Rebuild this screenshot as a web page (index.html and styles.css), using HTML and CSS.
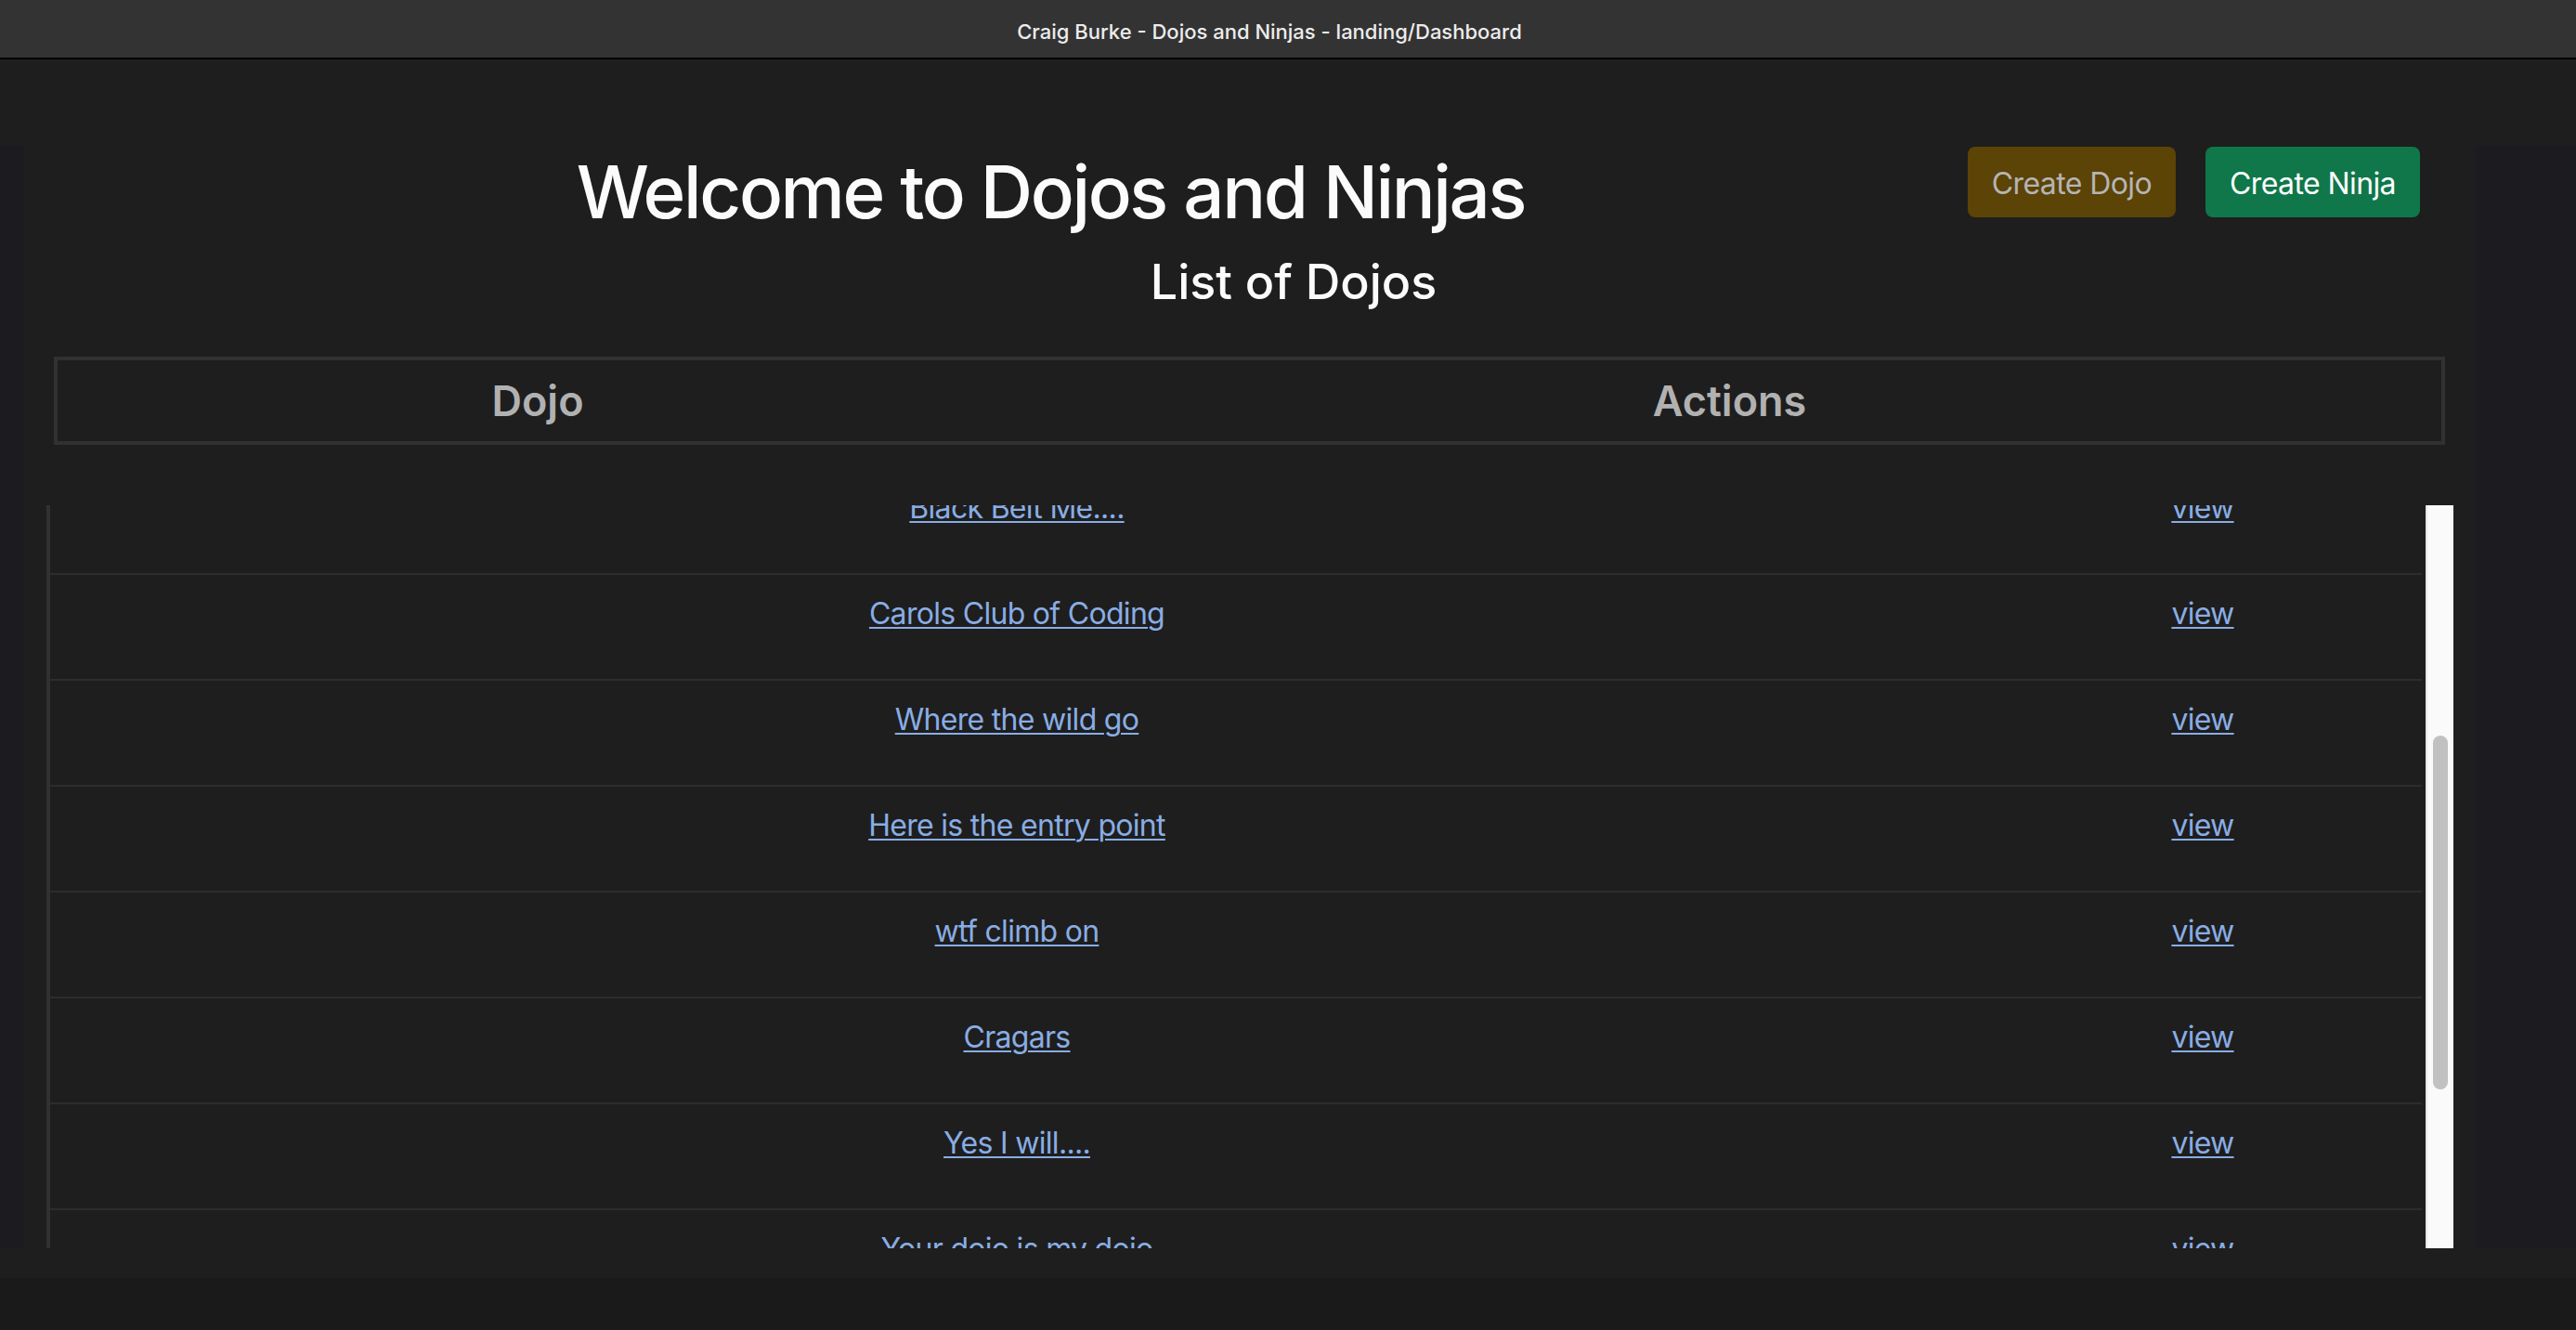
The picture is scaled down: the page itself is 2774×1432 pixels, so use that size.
FILE: index.html
```html
<!DOCTYPE html>
<html lang="en">
<head>
<meta charset="utf-8">
<title>Craig Burke - Dojos and Ninjas - landing/Dashboard</title>
<link rel="stylesheet" href="styles.css">
</head>
<body>
<div class="titlebar"><span class="title-text">Craig Burke - Dojos and Ninjas - landing/Dashboard</span></div>
<div class="topspace"></div>
<div class="viewport">
  <div class="strip strip-left"></div>
  <main class="main">
    <div class="header-row">
      <h1 class="page-title">Welcome to Dojos and Ninjas</h1>
      <div class="actions">
        <a class="btn btn-dojo" href="#">Create Dojo</a>
        <a class="btn btn-ninja" href="#">Create Ninja</a>
      </div>
    </div>
    <h2 class="sub-title">List of Dojos</h2>
    <div class="table-head">
      <div class="th">Dojo</div>
      <div class="th">Actions</div>
    </div>
    <div class="table-wrap">
      <div class="table-body" id="tbody">
        <div class="tr"><div class="td"><a href="#">Black Belt Me....</a></div><div class="td td-act"><a href="#">view</a></div></div>
        <div class="tr"><div class="td"><a href="#">Carols Club of Coding</a></div><div class="td td-act"><a href="#">view</a></div></div>
        <div class="tr"><div class="td"><a href="#">Where the wild go</a></div><div class="td td-act"><a href="#">view</a></div></div>
        <div class="tr"><div class="td"><a href="#">Here is the entry point</a></div><div class="td td-act"><a href="#">view</a></div></div>
        <div class="tr"><div class="td"><a href="#">wtf climb on</a></div><div class="td td-act"><a href="#">view</a></div></div>
        <div class="tr"><div class="td"><a href="#">Cragars</a></div><div class="td td-act"><a href="#">view</a></div></div>
        <div class="tr"><div class="td"><a href="#">Yes I will....</a></div><div class="td td-act"><a href="#">view</a></div></div>
        <div class="tr"><div class="td"><a href="#">Your dojo is my dojo</a></div><div class="td td-act"><a href="#">view</a></div></div>
      </div>
      <div class="scrollbar"><div class="thumb" style="margin-top:248px;height:381px"></div></div>
    </div>
  </main>
  <div class="strip strip-right"></div>
</div>
<div class="bottom-a"></div>
<div class="bottom-b"></div>
<script src="script.js"></script>
</body>
</html>
```

FILE: styles.css
```css
html, body {
  margin: 0;
  padding: 0;
}
body {
  width: 2774px;
  height: 1432px;
  overflow: hidden;
  background: #1a1a1a;
  font-family: Inter, "Liberation Sans", sans-serif;
  color: #fafafa;
}
.titlebar {
  height: 62px;
  background: #333333;
  border-bottom: 2px solid #000;
  display: flex;
  align-items: center;
  justify-content: center;
  padding-right: 40px;
}
.title-text {
  font-size: 22px;
  font-weight: 500;
  color: #ececec;
  padding-top: 6px;
}
.topspace {
  height: 93px;
  background: #1e1e1e;
}
.viewport {
  height: 1187px;
  display: flex;
  background: #1c1c20;
}
.strip-left {
  width: 26px;
  flex: none;
}
.strip-right {
  flex: 1;
}
.bottom-a {
  height: 32px;
  background: #1e1e1e;
}
.bottom-b {
  height: 56px;
  background: #1a1a1a;
}
.main {
  width: 2640px;
  flex: none;
  background: #1e1e1e;
  display: flex;
  flex-direction: column;
}
.header-row {
  display: flex;
  align-items: flex-start;
  padding: 1px 60px 0 118px;
}
.page-title {
  flex: 1;
  margin: 2px 0 0;
  text-align: center;
  font-size: 78px;
  line-height: 94px;
  font-weight: 500;
  letter-spacing: -2.4px;
  color: #fbfbfb;
}
.actions {
  display: flex;
  gap: 32px;
}
.btn {
  display: flex;
  align-items: center;
  height: 76px;
  padding: 2px 26px 0;
  border-radius: 8px;
  font-size: 32px;
  letter-spacing: -0.6px;
  text-decoration: none;
  box-sizing: border-box;
}
.btn-dojo {
  background: #5c4306;
  color: #b5b5b5;
}
.btn-ninja {
  background: #0f774a;
  color: #ffffff;
}
.sub-title {
  margin: 19px 0 0;
  padding-left: 94px;
  text-align: center;
  font-size: 52px;
  line-height: 62px;
  font-weight: 500;
  color: #fbfbfb;
}
.table-head {
  margin: 49px 33px 0 32px;
  height: 95px;
  box-sizing: border-box;
  border: 4px solid #313131;
  display: grid;
  grid-template-columns: 1034px 1fr;
}
.th {
  display: flex;
  align-items: center;
  justify-content: center;
  font-size: 45px;
  font-weight: 600;
  color: #b1b1b1;
}
.table-wrap {
  margin: 65px 0 0 24px;
  width: 2592px;
  height: 800px;
  display: flex;
  gap: 4px;
}
.table-body {
  flex: 1;
  height: 800px;
  box-sizing: border-box;
  border-left: 4px solid #313131;
  overflow: hidden;
}
.scrollbar {
  width: 30px;
  flex: none;
  box-sizing: border-box;
  background: #fafafa;
  border-left: 2px solid #e6e6e6;
  border-right: 2px solid #f1f1f1;
  padding: 0 4px 0 6px;
}
.thumb {
  width: 16px;
  border-radius: 8px;
  background: #c1c1c1;
}
.tr {
  display: grid;
  grid-template-columns: 2082px 1fr;
  height: 114px;
  box-sizing: border-box;
  border-bottom: 2px solid #2d2d2d;
}
.td {
  padding-top: 17px;
  text-align: center;
  font-size: 32px;
  letter-spacing: -0.7px;
  line-height: 50px;
}
.td a {
  color: #89ade4;
  text-decoration: underline;
  text-decoration-thickness: 2px;
  text-underline-offset: 3px;
}
```

FILE: script.js
```js
document.getElementById('tbody').scrollTop = 39;
```
